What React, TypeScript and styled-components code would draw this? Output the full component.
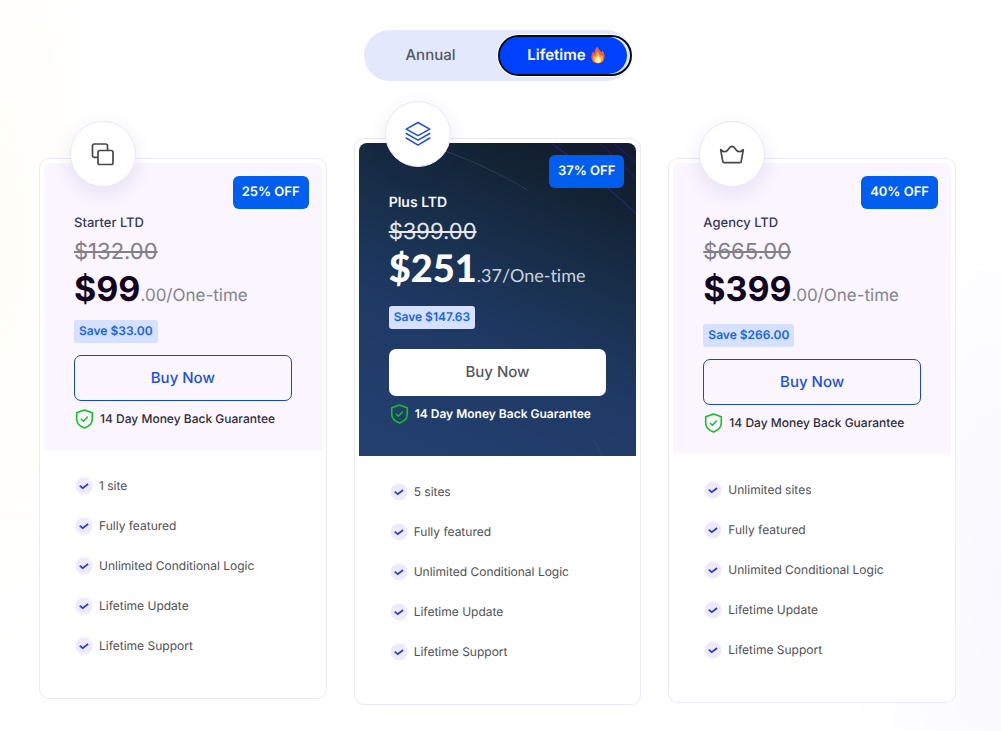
import React, { useState } from "react";
import styled, { createGlobalStyle, css } from "styled-components";

const GlobalStyle = createGlobalStyle`
  *, *::before, *::after { box-sizing: border-box; }
  body {
    margin: 0;
    min-height: 100vh;
    background:
      radial-gradient(ellipse 100px 420px at 0 230px, #fffdf6, rgba(255, 253, 246, 0)),
      radial-gradient(ellipse 160px 420px at 100% 580px, #f9f8ff, rgba(249, 248, 255, 0)),
      #fff;
    font-family: Inter, "Liberation Sans", sans-serif;
    text-rendering: geometricPrecision;
    color: #50525a;
  }
  button { font-family: inherit; text-rendering: inherit; cursor: pointer; }
`;

const Page = styled.main`
  display: flex;
  flex-direction: column;
  padding: 30px 45px 26px 39px;
`;

const Switch = styled.div`
  display: flex;
  align-self: center;
  align-items: center;
  height: 51px;
  border-radius: 26px;
  background: #e3e9fd;
`;

const Option = styled.button<{ $active: boolean }>`
  display: flex;
  width: 134px;
  height: 41px;
  padding: 0;
  border: 2px solid transparent;
  border-radius: 21px;
  background: none;
  color: #565862;
  font-size: 15px;
  font-weight: 500;
  line-height: 20px;
  outline: none;

  ${(p) =>
    p.$active &&
    css`
      padding-right: 3px;
      border-color: #080b16;
      background: linear-gradient(90deg, #0040ff 50%, #e3e9fd 50%);
      box-shadow: 0 0 0 1px #fff;
      color: #fff;
      font-weight: 600;
    `}
`;

const OptionFace = styled.span<{ $active: boolean }>`
  display: flex;
  flex: 1;
  align-self: stretch;
  align-items: center;
  justify-content: center;
  gap: 4px;
  padding: 0 0 2px ${(p) => (p.$active ? 7 : 0)}px;
  border-radius: 19px;
  background: ${(p) => (p.$active ? "#0040ff" : "none")};
`;

const Plans = styled.section`
  display: grid;
  grid-template-columns: repeat(3, minmax(0, 1fr));
  align-items: start;
  gap: 27px;
  margin-top: 57px;
`;

const Card = styled.article<{ $featured: boolean }>`
  position: relative;
  margin-top: ${(p) => (p.$featured ? 0 : 20)}px;
  padding: 4px;
  border: 1px solid #ece9fa;
  border-radius: 10px;
  background: #fff;
`;

const IconDisc = styled.div`
  position: absolute;
  z-index: 2;
  top: -38px;
  left: 30px;
  display: grid;
  place-items: center;
  width: 66px;
  height: 66px;
  border: 1px solid #ebe8fa;
  border-radius: 50%;
  background: #fff;
  box-shadow: 0 6px 20px rgba(60, 40, 130, 0.1);
`;

const Head = styled.header<{ $featured: boolean }>`
  position: relative;
  display: flex;
  flex-direction: column;
  align-items: flex-start;
  overflow: hidden;
  padding: 50px 30px ${(p) => (p.$featured ? 32 : 21)}px;
  border-radius: 8px 8px 0 0;
  background: ${(p) =>
    p.$featured
      ? "linear-gradient(22deg, #23406f 0%, #203a66 38%, #182f4c 62%, #12202f 88%, #131a33 100%)"
      : "#faf5ff"};
  color: ${(p) => (p.$featured ? "#fff" : "#2b2c37")};
`;

const Streaks = styled.svg`
  position: absolute;
  inset: 0;
  width: 100%;
  height: 100%;
`;

const Discount = styled.span<{ $featured: boolean }>`
  position: absolute;
  top: ${(p) => (p.$featured ? 12 : 13)}px;
  right: ${(p) => (p.$featured ? 12 : 13)}px;
  padding: 6px 9px;
  border-radius: 6px;
  background: #005eee;
  color: #fff;
  font-size: 13px;
  font-weight: 600;
  line-height: 21px;
`;

const PlanName = styled.h2<{ $featured: boolean }>`
  position: relative;
  margin: 0;
  color: ${(p) => (p.$featured ? "#f3f6fb" : "#343b56")};
  font-size: ${(p) => (p.$featured ? 14 : 13)}px;
  font-weight: ${(p) => (p.$featured ? 600 : 500)};
  line-height: 20px;
`;

const OldPrice = styled.s<{ $featured: boolean }>`
  position: relative;
  color: ${(p) => (p.$featured ? "#e4e8ee" : "#808086")};
  font-size: 22px;
  line-height: 38px;
`;

const Price = styled.p<{ $featured: boolean }>`
  position: relative;
  display: flex;
  align-items: baseline;
  margin: 0;
  color: ${(p) => (p.$featured ? "#fff" : "#12041f")};
  font-family: ${(p) => (p.$featured ? "Lato, Inter, sans-serif" : "inherit")};
  font-size: ${(p) => (p.$featured ? 38 : 34)}px;
  font-variant-ligatures: none;
  line-height: ${(p) => (p.$featured ? 34 : 38)}px;
  white-space: nowrap;
`;

const Amount = styled.strong<{ $featured: boolean }>`
  font-weight: ${(p) => (p.$featured ? 900 : 700)};
`;

const Term = styled.span<{ $featured: boolean }>`
  color: ${(p) => (p.$featured ? "#cbd2dc" : "#85858d")};
  font-size: ${(p) => (p.$featured ? 18 : 17)}px;
  line-height: 20px;
`;

const Saving = styled.span<{ $gap: number }>`
  position: relative;
  margin-top: ${(p) => p.$gap}px;
  padding: 1px 5px 2px;
  border-radius: 3px;
  background: #d6e0ff;
  color: #1665e8;
  font-size: 12px;
  font-weight: 600;
  line-height: 20px;
`;

const Buy = styled.button<{ $featured: boolean }>`
  position: relative;
  align-self: stretch;
  height: ${(p) => (p.$featured ? 47 : 46)}px;
  margin-top: ${(p) => (p.$featured ? 20 : 12)}px;
  padding: 0 0 2px;
  border: ${(p) => (p.$featured ? "none" : "1px solid #1548c8")};
  border-radius: 7px;
  background: ${(p) => (p.$featured ? "#fff" : "transparent")};
  color: ${(p) => (p.$featured ? "#55565b" : "#1a50e6")};
  font-size: 15px;
  font-weight: 500;
`;

const Guarantee = styled.p<{ $featured: boolean }>`
  position: relative;
  display: flex;
  align-items: center;
  gap: 5px;
  margin: 8px 0 0;
  font-size: 12px;
  font-weight: ${(p) => (p.$featured ? 600 : 500)};
  line-height: 20px;
  white-space: nowrap;
`;

const Features = styled.ul`
  display: flex;
  flex-direction: column;
  gap: 20px;
  margin: 0;
  padding: 26px 30px 38px;
  list-style: none;
`;

const Feature = styled.li`
  display: flex;
  align-items: center;
  gap: 6px;
  padding-left: 1px;
  color: #505054;
  font-size: 12px;
  line-height: 20px;
`;

const Flame = () => (
  <svg width="16" height="18" viewBox="0 0 16 18" aria-hidden="true">
    <path d="M7.600.5c.3 2.300 2.600 3.600 3.600 5.900.6-.5 1-1.200 1-2.100 1.500 1.800 2.400 4.100 2.400 6.300 0 4-2.700 6.900-6.600 6.900S1.400 14.700 1.400 11c0-2.300.9-4 2-5.400.1 1 .4 1.700 1 2.200C4.200 5.300 5.300 2.400 7.600.5z" fill="#f0603a" />
    <path d="M8 5.400c.1 2 2.200 3 2.900 4.900.4-.3.700-.8.8-1.400 1 1 1.400 2.200 1.400 3.400 0 2.800-2.200 4.800-5 4.800s-5-1.900-5-4.600c0-1.500.6-2.500 1.400-3.400.2.700.5 1.200 1 1.500.1-2.200 1-3.900 2.500-5.200z" fill="#fbab2d" />
    <path d="M8 9c.2 1.500 3 2.700 3 5 0 1.800-1.400 2.900-3 2.900s-3-1.100-3-2.900C5 12 7.500 10.800 8 9z" fill="#fff0b8" />
  </svg>
);

const CopyIcon = () => (
  <svg width="24" height="24" viewBox="0 0 24 24" fill="none" stroke="#47474a" strokeWidth="1.700" strokeLinejoin="round" aria-hidden="true">
    <path d="M7 15.300H3.200a1.700 1.700 0 0 1-1.700-1.700V3.700A1.700 1.700 0 0 1 3.200 2h11.600a1.700 1.700 0 0 1 1.700 1.700v4.800" />
    <rect x="7" y="8.500" width="15" height="14" rx="1.700" />
  </svg>
);

const LayersIcon = () => (
  <svg width="26" height="26" viewBox="0 0 26 26" fill="none" stroke="#1d4fe0" strokeWidth="1.500" strokeLinejoin="round" strokeLinecap="round" aria-hidden="true">
    <path d="M13 1.500l11.800 6.600L13 14.700 1.200 8.100z" />
    <path d="M1.200 12.500L13 19.200l11.800-6.700" />
    <path d="M1.200 17L13 24.200 24.800 17" />
  </svg>
);

const CrownIcon = () => (
  <svg width="26" height="26" viewBox="0 0 26 26" fill="none" stroke="#47474a" strokeWidth="1.700" strokeLinejoin="round" aria-hidden="true">
    <path d="M1.700 8.600c2.200 2.700 5 2.700 7 .5 1.400-1.500 1.900-3.400 4.300-3.700 2.400.3 2.900 2.200 4.300 3.700 2 2.200 4.800 2.200 7-.5l-2.100 12.100c-.1.700-.6 1-1.200 1H5c-.6 0-1.100-.3-1.200-1z" />
  </svg>
);

const ShieldIcon = () => (
  <svg width="21" height="20" viewBox="0 0 21 20" fill="none" stroke="#12c222" strokeWidth="1.600" strokeLinecap="round" strokeLinejoin="round" aria-hidden="true">
    <path d="M10.500 1l7.800 2.800v6.400c0 4.100-3.500 7.100-7.800 8.800-4.300-1.700-7.800-4.700-7.800-8.800V3.800z" />
    <path d="M7.300 10.200l2.100 2 4-4.100" strokeWidth="1.400" />
  </svg>
);

const CheckIcon = () => (
  <svg width="18" height="18" viewBox="0 0 18 18" fill="none" aria-hidden="true">
    <circle cx="9" cy="9" r="8.500" fill="#f0e9fe" />
    <path d="M4.700 8.700l3 2.500 5.400-4.200" stroke="#1c3fd0" strokeWidth="1.700" />
  </svg>
);

type Plan = {
  name: string;
  off: string;
  old: string;
  amount: string;
  term: string;
  save: string;
  saveGap: number;
  sites: string;
  icon: React.ReactNode;
  featured: boolean;
};

const plans: Plan[] = [
  { name: "Starter LTD", off: "25% OFF", old: "$132.00", amount: "$99", term: ".00/One-time", save: "Save $33.00", saveGap: 11, sites: "1 site", icon: <CopyIcon />, featured: false },
  { name: "Plus LTD", off: "37% OFF", old: "$399.00", amount: "$251", term: ".37/One-time", save: "Save $147.63", saveGap: 21, sites: "5 sites", icon: <LayersIcon />, featured: true },
  { name: "Agency LTD", off: "40% OFF", old: "$665.00", amount: "$399", term: ".00/One-time", save: "Save $266.00", saveGap: 15, sites: "Unlimited sites", icon: <CrownIcon />, featured: false },
];

const shared = ["Fully featured", "Unlimited Conditional Logic", "Lifetime Update", "Lifetime Support"];

const PlanCard = ({ plan }: { plan: Plan }) => {
  const $featured = plan.featured;
  return (
    <Card $featured={$featured}>
      <IconDisc>{plan.icon}</IconDisc>
      <Head $featured={$featured}>
        {$featured && (
          <Streaks viewBox="0 0 277 313" preserveAspectRatio="none" fill="none" aria-hidden="true">
            <path d="M86 8Q130 24 168 47" stroke="#2b5266" strokeOpacity=".6" />
            <path d="M192 0Q240 36 277 71" stroke="#2c2c8c" strokeOpacity=".8" />
            <path d="M240 0L277 36M254 0L277 20" stroke="#33188a" strokeOpacity=".7" />
            <path d="M150 40Q220 75 277 120" stroke="#1d2746" strokeOpacity=".6" />
            <path d="M180 130Q230 165 277 225" stroke="#203358" strokeOpacity=".6" />
            <path d="M235 298L242 313" stroke="#34548a" strokeOpacity=".4" />
          </Streaks>
        )}
        <Discount $featured={$featured}>{plan.off}</Discount>
        <PlanName $featured={$featured}>{plan.name}</PlanName>
        <OldPrice $featured={$featured}>{plan.old}</OldPrice>
        <Price $featured={$featured}>
          <Amount $featured={$featured}>{plan.amount}</Amount>
          <Term $featured={$featured}>{plan.term}</Term>
        </Price>
        <Saving $gap={plan.saveGap}>{plan.save}</Saving>
        <Buy type="button" $featured={$featured}>Buy Now</Buy>
        <Guarantee $featured={$featured}>
          <ShieldIcon />
          14 Day Money Back Guarantee
        </Guarantee>
      </Head>
      <Features>
        {[plan.sites, ...shared].map((text) => (
          <Feature key={text}>
            <CheckIcon />
            {text}
          </Feature>
        ))}
      </Features>
    </Card>
  );
};

export default function App() {
  const [period, setPeriod] = useState("Lifetime");
  return (
    <>
      <GlobalStyle />
      <Page>
        <Switch role="group" aria-label="Billing period">
          {["Annual", "Lifetime"].map((name) => {
            const active = name === period;
            return (
              <Option key={name} type="button" $active={active} aria-pressed={active} onClick={() => setPeriod(name)}>
                <OptionFace $active={active}>
                  {name}
                  {name === "Lifetime" && <Flame />}
                </OptionFace>
              </Option>
            );
          })}
        </Switch>
        <Plans>
          {plans.map((plan) => (
            <PlanCard key={plan.name} plan={plan} />
          ))}
        </Plans>
      </Page>
    </>
  );
}
